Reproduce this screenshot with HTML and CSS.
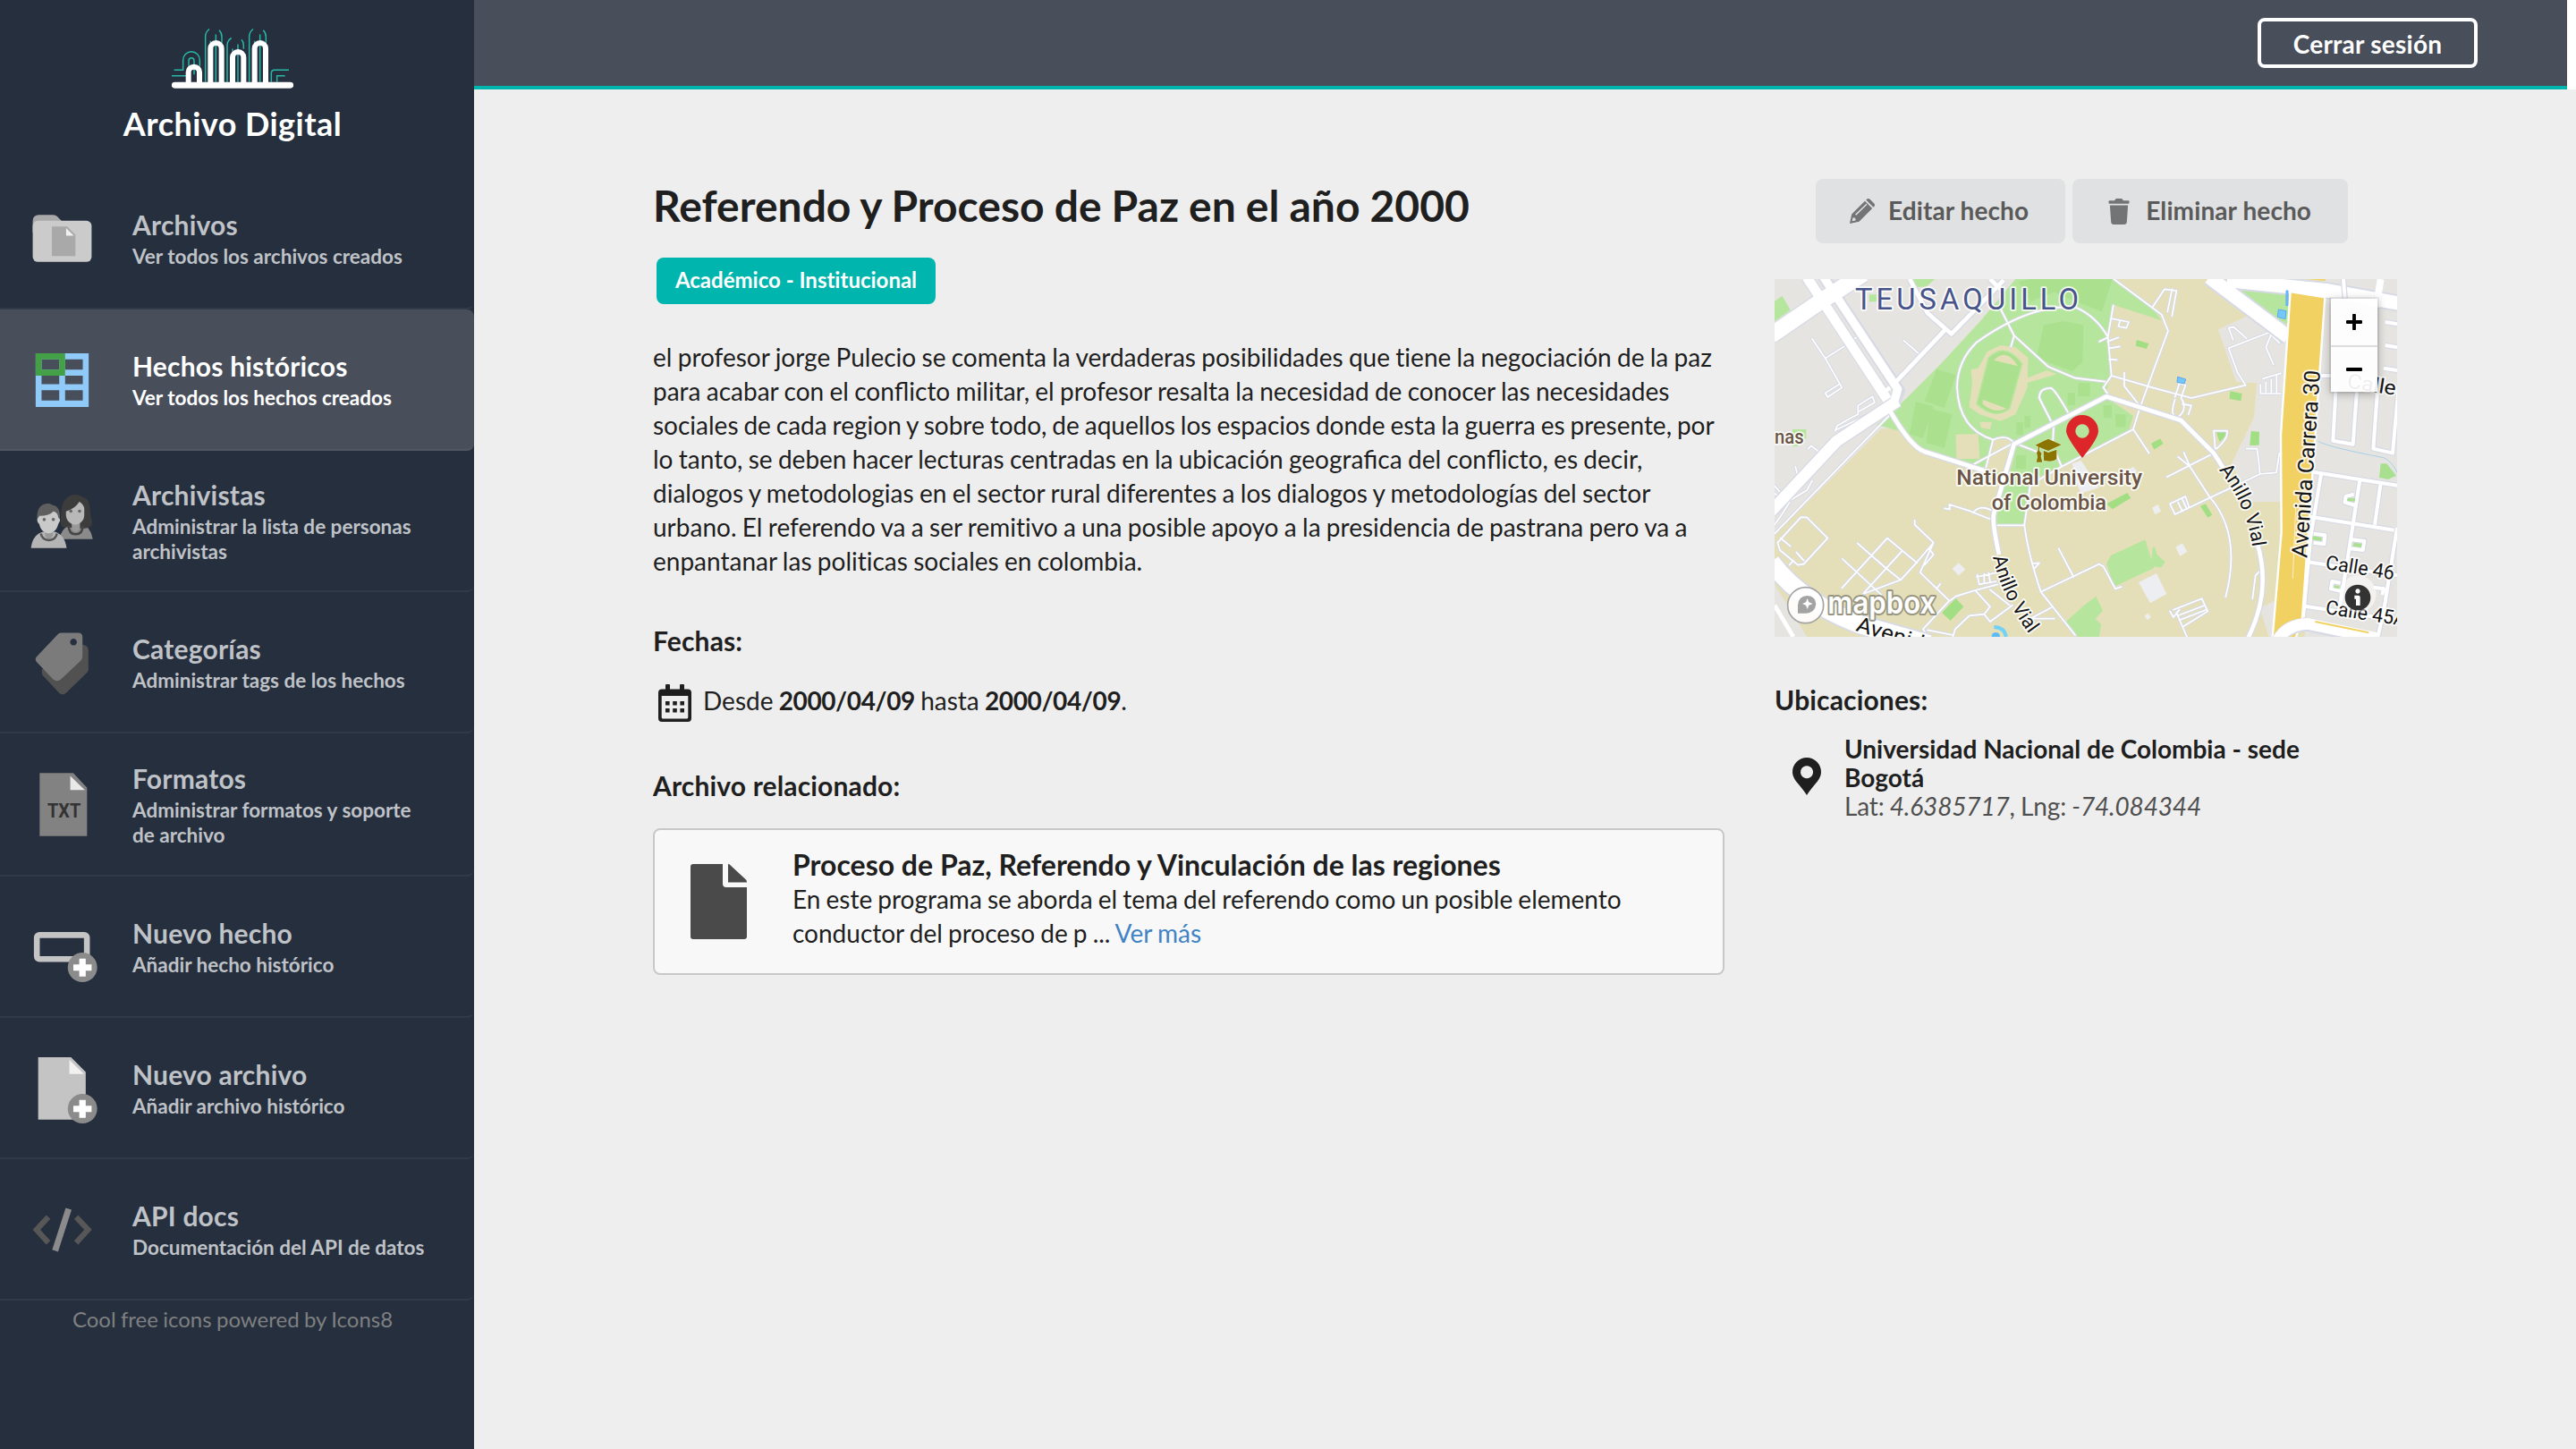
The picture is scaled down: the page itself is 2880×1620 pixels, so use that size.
FILE: index.html
```html
<!DOCTYPE html>
<html lang="es">
<head>
<meta charset="utf-8">
<title>Archivo Digital</title>
<link rel="stylesheet" href="styles.css">
</head>
<body>
<aside class="sidebar">
  <div class="brand">
    <svg class="brand-logo" viewBox="36 32 408 206">
      <g fill="none" stroke="#26b8a5" stroke-width="4.500">
        <path d="M44 173H74V140a28 28 0 0 1 56 0V160M36 193H84M93 160v-17a9 10 0 0 1 18 0v12M111 170v18"/>
        <path d="M149 213V62q0-16 13-26M195 40q9 9 9 22v20M184 54V214M166 82v-6M222 214V90q0-15 14-24M270 71q7 7 7 20v12M258 87V214M240 110v-8M296 214V62q0-16 13-26M343 40q9 9 9 22v20M332 54V214M314 82v-6"/>
        <path d="M370 214V184q0-11 11-11H429M389 214V193H416"/>
      </g>
      <g fill="none" stroke="#fff" stroke-width="18">
        <path d="M92 220V181a18 18 0 0 1 37 0V220M166 220V101a18 18 0 0 1 37 0V220M240 220V131a18 18 0 0 1 37 0V220M314 220V101a18 18 0 0 1 37 0V220"/>
        <path d="M46 224H434" stroke-width="21" stroke-linecap="round"/>
      </g>
    </svg>
    <div class="brand-name">Archivo Digital</div>
  </div>
  <nav class="menu">
    <a class="item">
      <svg class="item-icon" viewBox="0 0 48 48"><path fill="#a9a9a9" d="M4 20V12a4 4 0 0 1 4-4h10q1.500 0 2.500 1l4 4z"/><rect x="4" y="12" width="40" height="28" rx="3.500" fill="#cbcbcb"/><path fill="#a9a9a9" d="M17 16h10.500L33 21.500V36H17z"/><path fill="#f1f1f1" d="M26.700 17v5.200h5.200z"/></svg>
      <div><div class="item-title">Archivos</div><div class="item-sub">Ver todos los archivos creados</div></div>
    </a>
    <a class="item active">
      <svg class="item-icon" viewBox="0 0 48 48"><path fill="#90caf9" fill-rule="evenodd" d="M6 6h36v36.500H6zM10 10.200v7h12v-7zM10 21.300v5.700h12v-5.700zM26 21.300v5.700h12v-5.700zM26 10.200v7h12v-7zM10 31.200v7h12v-7zM26 31.200v7h12v-7z"/><path fill="#43a047" fill-rule="evenodd" d="M6 6h20v15.300H6zM10 10.200v7h12v-7z"/></svg>
      <div><div class="item-title">Hechos históricos</div><div class="item-sub">Ver todos los hechos creados</div></div>
    </a>
    <a class="item">
      <svg class="item-icon" viewBox="0 0 48 48">
        <path fill="#8a8a8a" d="M22 36.300q2-9 10-10.500h5q6.500 2 7.800 10.500z"/>
        <path fill="#3c3c3c" d="M24 28c-1.500-3-.8-6-.6-10C23.500 10 27.500 6 33.500 6c1.500 0 3 .6 4 1.600 5 .5 5.300 6 5.600 10.400.3 4 2.300 6.500.6 9.500-2 1.500-5 1.700-7.500 1.500z"/>
        <path fill="#999" d="M30.500 24h5.600v5q-2.800 5-5.600 0z"/>
        <path fill="#b8b8b8" d="M26.600 17.500q6.500-2 9-6.500 2.200 1 3.400 4v5c0 4-3.500 6.500-6.300 6.500s-6.100-3-6.100-6.500z"/>
        <path fill="none" stroke="#444" stroke-width="1.500" d="M28.400 27q0 6 4.800 6t4.800-6"/>
        <circle cx="29.900" cy="17.300" r="1.100" fill="#666"/><circle cx="35.800" cy="17.300" r="1.100" fill="#666"/>
        <path fill="#b5b5b5" d="M2.800 42.400Q4 33 11 31.300h8q6.800 2 8 11.100z"/>
        <path fill="#999" d="M12.300 28h5.400v6q-2.700 5-5.400 0z"/>
        <path fill="#5f5f5f" d="M7 24c-.6-8 2-11.800 7.500-11.800 1 0 2.200.3 3 1 4.200.5 5.500 4.500 4.800 10.800z"/>
        <path fill="#c9c9c9" d="M8.500 20.500q7 0 9.500-3 3 .5 3.500 4.500 1.500.5.900 2.200l-1 1.800c-1 4-3.500 6.300-6.600 6.300S9.300 30 8.400 26q-1.600-1-1.200-3.300z"/>
        <path fill="none" stroke="#555" stroke-width="1.500" d="M9.500 32.500q1 4.500 5.500 4.500t5.500-4.500"/>
        <circle cx="11.800" cy="23" r="1.100" fill="#666"/><circle cx="18" cy="23" r="1.100" fill="#666"/>
      </svg>
      <div><div class="item-title">Archivistas</div><div class="item-sub">Administrar la lista de personas<br>archivistas</div></div>
    </a>
    <a class="item">
      <svg class="item-icon" viewBox="0 0 48 48"><path fill="#515151" d="M34 12h4q3.800.5 3.800 4V29q0 1-.8 1.800L26.500 45q-2.200 1.800-4.400 0L10.500 32.500 10 29z"/><path fill="#7b7b7b" fill-rule="evenodd" d="M23 4h12q2.800 0 2.800 2.800V20q0 1.500-1 2.600L23 35.700q-2.500 1.800-5 0L6.500 23.500q-1.200-1.600 0-3.200L21 5q.8-1 2-1zM31.700 7.900a2.300 2.300 0 1 0 .01 0z"/></svg>
      <div><div class="item-title">Categorías</div><div class="item-sub">Administrar tags de los hechos</div></div>
    </a>
    <a class="item tall">
      <svg class="item-icon" viewBox="0 0 48 48"><path fill="#828282" d="M8.700 2.600H31.500l9.400 10V45.400H8.700z"/><path fill="#e9e9e9" d="M29.500 4.500v9.700h9.900z"/><text class="file-type" x="14" y="33" textLength="22.600" lengthAdjust="spacingAndGlyphs">TXT</text></svg>
      <div><div class="item-title">Formatos</div><div class="item-sub">Administrar formatos y soporte<br>de archivo</div></div>
    </a>
    <a class="item">
      <svg class="item-icon" viewBox="0 0 48 48"><rect x="6.800" y="16" width="34" height="16.400" rx="1.800" fill="none" stroke="#c4c4c4" stroke-width="4"/><circle cx="37.800" cy="38" r="10" fill="#8b8b8b"/><path fill="#fff" d="M35.600 32h4.400v4h4v4.200h-4v4h-4.400v-4h-4V36h4z"/></svg>
      <div><div class="item-title">Nuevo hecho</div><div class="item-sub">Añadir hecho histórico</div></div>
    </a>
    <a class="item">
      <svg class="item-icon" viewBox="0 0 48 48"><path fill="#c4c4c4" d="M7.700 3.100H30l10 10V45.400H7.700z"/><path fill="#f1f1f1" d="M28.900 4.900v9.500h9.900z"/><circle cx="37.800" cy="38" r="10" fill="#8b8b8b"/><path fill="#fff" d="M35.600 32h4.400v4h4v4.200h-4v4h-4.400v-4h-4V36h4z"/></svg>
      <div><div class="item-title">Nuevo archivo</div><div class="item-sub">Añadir archivo histórico</div></div>
    </a>
    <a class="item">
      <svg class="item-icon" viewBox="0 0 48 48"><g fill="none" stroke="#575757" stroke-width="3.800"><path d="M14.600 15.500 6.600 24.200 14.600 33M33.500 15.500 41.600 24.200 33.500 33"/></g><path stroke="#8b8b8b" stroke-width="4.200" d="M28.400 10 19.200 38.500"/></svg>
      <div><div class="item-title">API docs</div><div class="item-sub">Documentación del API de datos</div></div>
    </a>
  </nav>
  <div class="credit">Cool free icons powered by Icons8</div>
</aside>

<div class="page">
  <header class="topbar"><div class="topbar-inner"><a class="logout">Cerrar sesión</a></div></header>
  <main class="content">
    <section class="detail">
      <h1>Referendo y Proceso de Paz en el año 2000</h1>
      <span class="label">Académico - Institucional</span>
      <p class="description">el profesor jorge Pulecio se comenta la verdaderas posibilidades que tiene la negociación de la paz<br>para acabar con el con<span class="lig">fl</span>icto militar, el profesor resalta la necesidad de conocer las necesidades<br><span class="tight">sociales de cada region y sobre todo, de aquellos los espacios donde esta la guerra es presente, por</span><br>lo tanto, se deben hacer lecturas centradas en la ubicación geogra<span class="lig">fi</span>ca del con<span class="lig">fl</span>icto, es decir,<br>dialogos y metodologias en el sector rural diferentes a los dialogos y metodologías del sector<br>urbano. El referendo va a ser remitivo a una posible apoyo a la presidencia de pastrana pero va a<br>enpantanar las politicas sociales en colombia.</p>
      <h3 class="dates-title">Fechas:</h3>
      <div class="dates">
        <svg class="calendar" viewBox="0 0 37 42"><path fill="#1f1f1f" fill-rule="evenodd" d="M8 1q0-1 1-1h3q1 0 1 1v4.500h11V1q0-1 1-1h3q1 0 1 1v4.500h4q4 0 4 4V38q0 4-4 4H4q-4 0-4-4V9.500q0-4 4-4h4zM3.700 13v24q0 1.500 1.500 1.500h26.600q1.500 0 1.500-1.500V13z"/><path fill="#1f1f1f" d="M8 19h4.600v4.600H8zM16.200 19h4.600v4.600h-4.600zM24.400 19H29v4.600h-4.600zM8 27h4.600v4.600H8zM16.200 27h4.600v4.600h-4.600zM24.400 27H29v4.600h-4.600z"/></svg>
        <span>Desde <b>2000/04/09</b> hasta <b>2000/04/09</b>.</span>
      </div>
      <h3 class="related-title">Archivo relacionado:</h3>
      <article class="card">
        <svg class="card-icon" viewBox="0 0 63 84"><path fill="#4a4a4a" d="M3 0H36V22q0 4 4 4H63V81q0 3-3 3H3q-3 0-3-3V3Q0 0 3 0zM42 0q1.500 0 2.500 1.200L62 17.500q1 1 1 3H42z"/></svg>
        <div>
          <h2>Proceso de Paz, Referendo y Vinculación de las regiones</h2>
          <p>En este programa se aborda el tema del referendo como un posible elemento<br>conductor del proceso de p ... <a class="more">Ver más</a></p>
        </div>
      </article>
    </section>

    <section class="side">
      <div class="actions">
        <a class="button"><svg class="pencil" viewBox="0 0 28 28"><path fill="#737475" fill-rule="evenodd" d="M2.200 17.500 17 2.800l8.200 8.200L10.500 25.700 0 28zM3.500 21.500l-.8 3.800 3.800-.8v-2.300H5.600v-.9zM6 17.800l1.200 1L19.500 6.800l-1-1.100zM18.300 1.500l.8-.8q1.700-1.400 3.400 0l4.800 4.800q1.400 1.700 0 3.400l-.8.800z"/></svg><span>Editar hecho</span></a>
        <a class="button"><svg class="trash" viewBox="0 0 24 29"><path fill="#737475" d="M1.500 2.300H7.200L8 .8Q8.400 0 9.500 0h5q1.100 0 1.500.8l.8 1.500h5.700q1 0 1 1v1.500q0 1-1 1h-21q-1 0-1-1V3.300q0-1 1-1zM1.900 7.500h20.200L20.800 26.600q-.2 2.400-2.600 2.400H5.800q-2.400 0-2.600-2.400z"/></svg><span>Eliminar hecho</span></a>
      </div>
      <div class="map">
        <svg class="map-canvas" viewBox="42 36 2088 1200">
          <rect x="42" y="36" width="2088" height="1200" fill="#e5dfb9"/>
          <path fill="#e6e4e1" d="M42 36H860L600 320 480 440 480 535 400 538 42 895z"/>
          <path fill="#b6e69d" d="M850 36H1175L1310 135 1340 175 1180 123 1155 220 1170 360 1150 430 1245 495 1230 545 930 700 900 725 885 860H785L800 700 700 665 540 612 460 545 385 525 480 440 600 320 730 180z"/>
          <path fill="#b6e69d" d="M42 110 68 92 95 140 42 178zM500 36H580L550 62H520zM360 88H385V112H360zM102 540H148V570H120V597H102z"/>
          <path fill="#e5dfb9" d="M748 680 780 575 830 570 855 590 830 690zM650 557 725 555 730 638 652 640z"/>
          <g fill="#abe08f"><path d="M585 338 650 358 612 468 545 446zM515 448 575 462 540 570 495 556zM565 470 638 490 612 602 550 585zM945 190 1010 177 1078 190 1075 315 1040 345 920 300zM860 45 900 36H1175L1140 145 1060 115 980 80 900 110zM1060 385h40v45h-40zM1025 418h25v40h-25zM1145 460h28v40h-28zM1185 490h35v42h-35zM853 517h22v42h-22zM880 495h20v40h-20zM852 628h33v45h-33z"/></g>
          <path fill="#e5dfb9" d="M755 280 800 258 850 265 892 300 890 400 850 490 800 512 730 490 695 465 705 380 700 340 725 335z"/>
          <path fill="#abe08f" stroke="#b6e69d" stroke-width="5" d="M760 300Q815 245 872 320L830 470Q780 510 720 455z"/>
          <path fill="#e5dfb9" d="M778 308Q820 265 858 328zM740 440L820 470Q780 490 740 455zM730 515 770 515 765 540 735 535zM885 370 955 342 988 355 920 375 885 385z"/>
          <path fill="#edeef2" d="M1040 655 1070 645 1130 735 1070 755 1055 720zM1263 1053 1323 1023 1357 1092 1302 1123zM1387 935 1410 922 1426 950 1402 965zM638 1008 660 988 682 1010 660 1030zM1308 803 1328 792 1338 815 1318 825zM1230 675 1245 665 1258 680 1245 690zM1283 1165 1295 1157 1305 1170 1292 1180z"/>
          <g fill="#b6e69d"><path d="M1155 990 1170 963 1285 910 1315 1005 1180 1068zM1310 935 1318 935 1325 960 1352 985 1340 1003 1305 1000zM1020 1185 1080 1130 1120 1100 1143 1148 1118 1175 1138 1195 1130 1236 1060 1236z"/></g>
          <g fill="#a2df84"><path d="M603 1155 650 1107 676 1135 632 1182zM1256 240 1297 252 1290 270 1253 260zM1305 588 1335 571 1346 588 1315 608zM1570 412 1610 420 1606 445 1568 438zM1640 546 1668 548 1667 593 1636 594zM1155 790 1225 753 1237 770 1175 808zM1470 798 1488 790 1510 827 1495 836z"/></g>
          <path fill="#e6e4e1" d="M1530 205 1760 100V783H1640L1575 655 1650 500 1660 385 1590 380zM1670 1140 1720 1115V1236H1700z"/>
          <path fill="#e6e4e1" d="M1880 36H2130V1236H1820z"/>
          <path fill="#a2df84" d="M1640 546 1668 548 1667 593 1636 594zM1522 545 1550 540 1558 560 1535 582z"/>
          <path fill="#b6e69d" d="M1570 36H1765V190L1680 150z"/>

          <!-- minor streets: casing, then fill -->
          <g fill="none" stroke-linejoin="round" stroke-linecap="round">
            <g stroke="#d7dae5" stroke-width="11"><use href="#paths"/></g>
            <g stroke="#fff" stroke-width="5"><g id="paths">
              <path d="M168 236 212 302 268 400 220 432 212 418 260 388M212 302 275 262M475 242 530 290M300 240 318 232M155 605 165 595 190 615M112 665 118 688M42 890 430 490M42 790 90 780 150 745 168 712M42 860 62 832 92 785M245 545 252 528 300 500 322 490 322 460 370 430 378 450 325 480M245 543 400 470"/>
              <path d="M802 100V140L845 225 960 330 1050 368 1150 380M835 262 845 228M1050 130Q900 120 720 248 655 310 654 400 660 540 775 575L748 680M1050 130Q1120 160 1160 230L1172 360 1145 400 1165 430M1160 230 1178 125M1170 168 1230 180 1222 200 1195 195 1200 178M1160 245 1195 232M1165 268 1200 262M1165 305 1190 307M1132 245 1160 232"/>
              <path d="M775 575Q820 555 845 585L695 665M845 585 935 620M975 590 978 530 930 435Q930 400 970 402 985 410 1030 490M985 620 1005 665 900 725 880 860M1005 665 1245 540 1265 475 1310 350 1362 210 1340 155 1180 36M1310 130 1350 70 1390 75 1375 160M1360 145 1375 70M1172 360 1310 400 1440 435 1622 392 1595 350 1565 268 1700 215 1735 250M1580 240 1565 200 1582 197 1625 235M1710 215 1690 265 1715 322M1215 350V395L1270 465M1245 540 1298 620M1385 432 1400 385 1420 392 1405 435Q1430 470 1395 500 1365 500 1385 440M1410 455 1440 460 1430 490M1520 605 1515 545 1560 545Q1565 570 1525 605"/>
              <path d="M1358 700 1515 620M1395 632 1435 665 1500 765Q1610 890 1555 1102M1415 618 1435 665M1385 825 1670 690 1725 685 1735 620M1670 690 1665 640 1660 605 1625 605M1385 825 1368 790 1420 765 1432 800M1395 785 1410 815M1410 775 1425 808M780 862H880M880 860Q890 950 935 1085L1050 1230M935 1085 1130 992 1145 1000 1185 1075 1205 1068M995 940 1045 1035M905 990 930 988 915 1005M1645 1108 1655 1030 1670 1015M1680 370 1740 352M1672 420H1740M1672 420V390M1690 420V382M1708 420V372M1726 420V362"/>
              <path d="M612 805 630 808 628 792 700 815 775 845M708 820Q730 790 770 812M512 845V860L575 920 520 985 465 1045 345 1090M575 920 530 1020 628 1115 540 1210 555 1236M560 940 575 960 545 995M320 922 415 1005 465 1045M270 975 400 1095M268 1072 420 905 520 988M340 1090 468 950M630 1115 650 1100 715 1080 790 1060M715 1080 765 1135 745 1160 695 1165 648 1210 640 1236M745 1160 765 1185 840 1130M765 1078 830 1130M720 1035 790 1020M722 1028 728 1060 785 1050M745 1025V1055M760 1022 765 1052M585 1075 598 1058M900 1175 970 1138M910 1175H980M555 1213 640 1230"/>
              <path d="M52 920 130 835 150 835 220 905 140 992 120 995 60 945zM62 905 95 932M115 952 140 980M92 995 105 980M42 730 60 750M42 755 55 765"/>
              <path d="M1368 1150 1380 1170 1400 1145 1390 1155 1425 1236M1380 1145 1475 1108 1495 1150 1415 1200M1395 1165 1485 1130M1400 1180 1490 1145"/>
            </g></g>
          </g>

          <!-- main streets -->
          <g fill="none" stroke-linejoin="round">
            <g stroke="#d7dae5">
              <path stroke-width="62" d="M30 225 190 115 340 18"/>
              <path stroke-width="40" d="M150 30 420 440 M200 20 460 410 440 460"/>
              <path stroke-width="46" d="M455 445 250 580 30 815"/>
              <path stroke-width="70" d="M30 985Q130 1120 330 1195L560 1260"/>
              <path stroke-width="22" d="M430 480Q500 600 545 615L750 680M495 36 555 150 635 220 810 40M620 200 450 380M765 36 800 70M795 960Q770 850 778 820L845 590 1155 430 1405 510 1515 620 1560 690M1660 920Q1710 1080 1630 1240"/>
              <path stroke-width="58" d="M1500 30 1765 230M1560 40 1900 75 2140 118"/>
            </g>
            <g stroke="#fff">
              <path stroke-width="54" d="M30 225 190 115 340 18"/>
              <path stroke-width="33" d="M150 30 420 440"/>
              <path stroke-width="28" d="M200 20 455 405 440 460"/>
              <path stroke-width="38" d="M455 445 250 580 30 815"/>
              <path stroke-width="60" d="M30 985Q130 1120 330 1195L560 1260M60 1150 110 1240" />
              <path stroke-width="14" d="M430 480Q500 600 545 615L750 680M495 36 555 150 635 220 810 40M620 200 450 380M765 36 800 70M795 960Q770 850 778 820L845 590 1155 430 1405 510 1515 620 1560 690M1660 920Q1710 1080 1630 1240M400 420 430 400"/>
              <path stroke-width="46" d="M1500 30 1765 230M1560 40 1900 75 2140 118"/>
            </g>
            <path fill="#e6e4e1" d="M42 1060 150 1236H42z"/>
            <path stroke="#fff" stroke-width="14" d="M42 1130 105 1236"/>
          </g>
          <path fill="#74c8f5" stroke="#5aa5f8" stroke-width="3" d="M1732 138 1758 143 1755 170 1729 163zM1758 75h6v50h-6zM1394 364 1421 372 1416 387 1392 382z"/>

          <!-- street grid east of the avenue -->
          <g fill="none" stroke-linejoin="round">
            <g stroke="#d7dae5" stroke-width="19"><use href="#grid"/></g>
            <g stroke="#fff" stroke-width="12"><g id="grid">
              <path d="M1830 680 2130 728M1820 830 2120 878M1800 980 2130 1030M1800 1130 2130 1180M1925 400 1915 578 1982 590 1995 410M2065 400 2050 605 2115 620 2135 400M2090 180 2130 187M2090 258 2130 265M1870 360H1920M2085 335 2130 342M1950 36 1955 100M1875 690 1840 900 1815 1170M2005 710 1960 1000 1935 1150M2075 720 2055 860M2130 870 2085 1150 2065 1236M1985 758 1958 765 1955 785 1990 795M1850 890 1888 895 1885 925 1850 920M1980 910 2020 915 2015 945 1975 940M1940 1055 1912 1050 1908 1075 1940 1082M2050 1070 2085 1075 2080 1095"/>
              <path stroke-width="24" d="M2075 36 2060 130"/>
            </g></g>
          </g>
          <g fill="#a9e08f"><path d="M1965 770 1990 772 1988 782 1962 780zM1848 898 1878 903 1875 914 1846 910zM1985 920 2012 924 2009 936 1982 932zM1920 1063 1937 1066 1935 1075 1918 1072zM2075 655 2095 655 2127 695 2100 708 2070 702z"/></g>
          <path fill="none" stroke="#a6d0e8" stroke-width="3" d="M1865 580Q1900 600 2085 635 2115 650 2130 685"/>

          <!-- Avenida Carrera 30 -->
          <path fill="#f1d162" stroke="#fff" stroke-width="7" d="M1772 78 1888 97 1812 1170 1790 1240 1712 1240 1742 885 1740 560z"/>
          <path fill="#f1d162" d="M1828 36h62v6z"/>
          <path fill="none" stroke="#d7dae5" stroke-width="46" d="M1730 1250Q1760 1195 1830 1195L2020 1236"/>
          <path fill="none" stroke="#fff" stroke-width="38" d="M1725 1255Q1755 1195 1830 1192L2060 1240"/>
          <path stroke="#f1d162" stroke-width="6" d="M1855 1185 2035 1222"/>
          <path stroke="#fff" stroke-width="2" d="M1790 800 1780 1040"/>

          <path fill="none" stroke="#72d1f7" stroke-width="12" d="M778 1203Q815 1205 818 1236"/><circle cx="784" cy="1235" r="14" fill="#5bbcf3"/>

          <g class="map-text">
            <text class="district" x="312" y="139" font-size="98" textLength="750" lengthAdjust="spacing">TEUSAQUILLO</text>
            <g class="poi"><text x="652" y="726" font-size="71" textLength="623" lengthAdjust="spacingAndGlyphs">National University</text><text x="770" y="809" font-size="71" textLength="385" lengthAdjust="spacingAndGlyphs">of Colombia</text><text x="42" y="589" font-size="68" textLength="98" lengthAdjust="spacingAndGlyphs">nas</text></g>
            <g class="road">
              <path id="vial-w" fill="none" stroke="none" d="M774 968Q805 1110 910 1245"/>
              <path id="vial-e" fill="none" stroke="none" d="M1532 676Q1625 790 1646 940"/>
              <text font-size="66"><textPath href="#vial-w" textLength="288" lengthAdjust="spacingAndGlyphs">Anillo Vial</textPath></text>
              <text font-size="66"><textPath href="#vial-e" textLength="286" lengthAdjust="spacingAndGlyphs">Anillo Vial</textPath></text>
              <text font-size="74" transform="translate(1828 972) rotate(-86)" textLength="630" lengthAdjust="spacingAndGlyphs">Avenida Carrera 30</text>
              <text font-size="66" transform="translate(1888 1008) rotate(9)" textLength="232" lengthAdjust="spacingAndGlyphs">Calle 46</text>
              <text font-size="66" transform="translate(1888 1158) rotate(9)" textLength="272" lengthAdjust="spacingAndGlyphs">Calle 45A</text>
              <text font-size="68" transform="translate(1960 400) rotate(9)" textLength="165" lengthAdjust="spacingAndGlyphs">Calle</text>
              <text font-size="72" transform="translate(312 1215) rotate(17)" textLength="275" lengthAdjust="spacingAndGlyphs">Avenida</text>
            </g>
          </g>

          <g fill="#8b7500" stroke="#fff" stroke-opacity=".6" stroke-width="3" paint-order="stroke"><path d="M960 572 1004 592 960 612 930 600V612L938 620 935 630 940 650H920L924 632 921 618 926 610V598L916 593z"/><path d="M944 611 960 618 988 608V640Q975 652 945 644z"/></g>
          <path fill="#dc2629" fill-rule="evenodd" d="M1074 636Q1020 565 1020 546a54 54 0 0 1 108 0Q1128 570 1074 636zM1074 523a23 23 0 1 0 .1 0z"/>

          <circle cx="146" cy="1130" r="60" fill="#fff" fill-opacity=".9" stroke="#a3a3a3" stroke-width="5"/>
          <path fill="#a3a3a3" fill-rule="evenodd" d="M120 1157V1130Q122 1098 152 1098 180 1100 181 1126 178 1155 148 1157zM152 1107 147 1120 135 1125 147 1130 152 1143 157 1130 170 1125 157 1120z"/>
          <text class="wordmark" x="220" y="1158" font-size="103" textLength="363" lengthAdjust="spacingAndGlyphs">mapbox</text>
          <circle cx="1998" cy="1092" r="62" fill="#fff" fill-opacity=".5"/>
          <circle cx="1998" cy="1104" r="43" fill="#333"/>
          <path fill="#fff" d="M1998 1075a8 8 0 1 0 .1 0zM1987 1097h13q6 0 6 6v28h-14v-22h-5z"/>
        </svg>
        <div class="zoom-control">
          <span class="zoom-button"><svg viewBox="0 0 16 16"><path d="M8 1.200V14.800M1.200 8H14.800"/></svg></span>
          <span class="zoom-button"><svg viewBox="0 0 16 16"><path d="M1.200 8H14.800"/></svg></span>
        </div>
      </div>
      <h3 class="places-title">Ubicaciones:</h3>
      <div class="place">
        <svg class="pin" viewBox="0 0 32 42"><path fill="#1f1f1f" fill-rule="evenodd" d="M16 42Q13 37 4 26.500 0 21 0 16a16 16 0 0 1 32 0Q32 21 28 26.500 19 37 16 42zM16 9.200a7 7 0 1 0 .1 0z"/></svg>
        <div>
          <div class="place-name">Universidad Nacional de Colombia - sede Bogotá</div>
          <div class="place-coords">Lat: <i>4.6385717</i>, Lng: <i>-74.084344</i></div>
        </div>
      </div>
    </section>
  </main>
</div>
</body>
</html>
```
FILE: styles.css
```css
* { box-sizing: border-box; }
body {
  margin: 0;
  display: flex;
  height: 1620px;
  overflow: hidden;
  background: #eee;
  color: #1f1f1f;
  font-family: Lato, "Liberation Sans", sans-serif;
  font-size: 28px;
  line-height: 38px;
  font-feature-settings: "liga" 0;
}
h1, h2, h3, p { margin: 0; }
svg { display: block; flex: none; }
.lig { font-feature-settings: "liga" 1; }

.sidebar {
  flex: none;
  width: 530px;
  height: 1620px;
  background: #262f3e;
}
.brand {
  height: 188px;
  padding: 31px 10px 0 0;
  display: flex;
  flex-direction: column;
  align-items: center;
}
.brand-logo { width: 136px; height: 69px; }
.brand-name {
  margin-top: 16px;
  color: #fff;
  font-size: 36px;
  font-weight: 700;
  letter-spacing: .45px;
  line-height: 44px;
}
.item {
  display: flex;
  align-items: center;
  gap: 39px;
  height: 158px;
  padding: 0 30px;
  border-bottom: 2px solid #313a49;
  border-radius: 0 8px 8px 0;
  color: #bfc2c7;
  font-weight: 700;
}
.item.tall { height: 160px; }
.item.active {
  background: #484e5a;
  border-color: #525863;
  color: #fff;
}
.item-icon { width: 79px; height: 79px; }
.item-title {
  margin-top: 2px;
  font-size: 30px;
  letter-spacing: .2px;
  line-height: 36px;
}
.item-sub {
  margin-top: 4px;
  font-size: 22.500px;
  line-height: 28px;
  white-space: nowrap;
}
.file-type {
  font: 700 13.600px Roboto, sans-serif;
  fill: #333;
}
.credit {
  padding: 2px 10px 0 0;
  color: #7f8081;
  font-size: 24px;
  text-align: center;
  word-spacing: -.8px;
}

.page { flex: 1; }
.topbar {
  height: 100px;
  background: #fff;
}
.topbar-inner {
  display: flex;
  justify-content: flex-end;
  width: 2340px;
  height: 100px;
  padding: 20px 100px 0 0;
  background: #484e5a;
  border-bottom: 4px solid #00b5ad;
}
.logout {
  width: 246px;
  height: 56px;
  border: 4px solid #fff;
  border-radius: 8px;
  color: #fff;
  font-weight: 700;
  letter-spacing: .25px;
  line-height: 50px;
  text-align: center;
}
.content {
  display: flex;
  gap: 56px;
  padding: 100px 200px 0;
}
.detail { width: 1198px; }
h1 {
  padding-top: 1px;
  font-size: 48px;
  font-weight: 700;
  line-height: 58px;
  word-spacing: -.6px;
}
h3 { font-size: 30px; line-height: 38px; font-weight: 700; letter-spacing: .15px; }
.label {
  display: block;
  width: 312px;
  height: 52px;
  margin: 29px 0 0 4px;
  border-radius: 8px;
  background: #00b5ad;
  color: #fff;
  font-size: 24px;
  font-weight: 700;
  line-height: 50px;
  text-align: center;
}
.description { margin-top: 40px; white-space: nowrap; word-spacing: -.85px; }
.tight { word-spacing: -1.250px; }
.dates-title { margin-top: 51px; }
.dates {
  display: flex;
  gap: 13px;
  margin-top: 29px;
  padding-left: 6px;
  word-spacing: -1px;
}
.dates b { letter-spacing: -.370px; }
.calendar { width: 37px; height: 42px; margin-top: 1px; }
.related-title { margin-top: 52px; }
.card {
  display: flex;
  gap: 51px;
  height: 164px;
  margin-top: 29px;
  padding: 20px 40px 0;
  border: 2px solid #c8c8c8;
  border-radius: 8px;
  background: #f8f8f8;
}
.card-icon { width: 63px; height: 84px; margin-top: 18px; }
.card p { word-spacing: -1.050px; }
h2 { font-size: 32px; line-height: 38px; font-weight: 700; }
.more { color: #4183c4; }

.side { width: 696px; }
.actions { display: flex; gap: 8px; padding-left: 46px; }
.button {
  display: flex;
  align-items: center;
  height: 72px;
  padding: 0 41px 0 38px;
  border-radius: 8px;
  background: #e0e1e2;
  color: #5a5a5a;
  font-weight: 700;
  letter-spacing: .1px;
}
.button span { padding-bottom: 2px; }
.pencil { width: 28px; height: 28px; margin-right: 15px; }
.trash { width: 24px; height: 29px; margin: 0 18px 0 2px; }
.map {
  position: relative;
  width: 696px;
  height: 400px;
  margin-top: 40px;
}
.map-canvas { width: 696px; height: 400px; }
.map-text {
  font-family: Roboto, sans-serif;
  stroke: #fff;
  stroke-opacity: .85;
  stroke-width: 11px;
  stroke-linejoin: round;
  paint-order: stroke;
}
.district { fill: #47548a; }
.poi { fill: #6b5547; font-weight: 500; }
.road { fill: #151515; }
.wordmark {
  font-family: Inter, sans-serif;
  font-weight: 600;
  fill: #fff;
  stroke: #989682;
  stroke-width: 12px;
  stroke-linejoin: round;
  paint-order: stroke;
}
.zoom-control {
  position: absolute;
  top: 22px;
  right: 22px;
  width: 52px;
  height: 104px;
  background: rgba(255, 255, 255, .93);
  box-shadow: 0 0 0 2px rgba(0, 0, 0, .06), 0 2px 10px rgba(0, 0, 0, .3);
}
.zoom-button {
  display: flex;
  align-items: center;
  justify-content: center;
  height: 52px;
}
.zoom-button + .zoom-button { border-top: 2px solid #ddd; }
.zoom-button svg {
  width: 18px;
  height: 18px;
  fill: none;
  stroke: #000;
  stroke-width: 3.400px;
  stroke-linecap: round;
}
.places-title { margin-top: 51px; }
.place { display: flex; gap: 26px; margin-top: 20px; padding-left: 20px; line-height: 32px; }
.pin { width: 32px; height: 42px; margin-top: 26px; }
.place-name { width: 540px; font-weight: 700; }
.place-coords { color: #505050; letter-spacing: -.15px; word-spacing: -.8px; }
```
